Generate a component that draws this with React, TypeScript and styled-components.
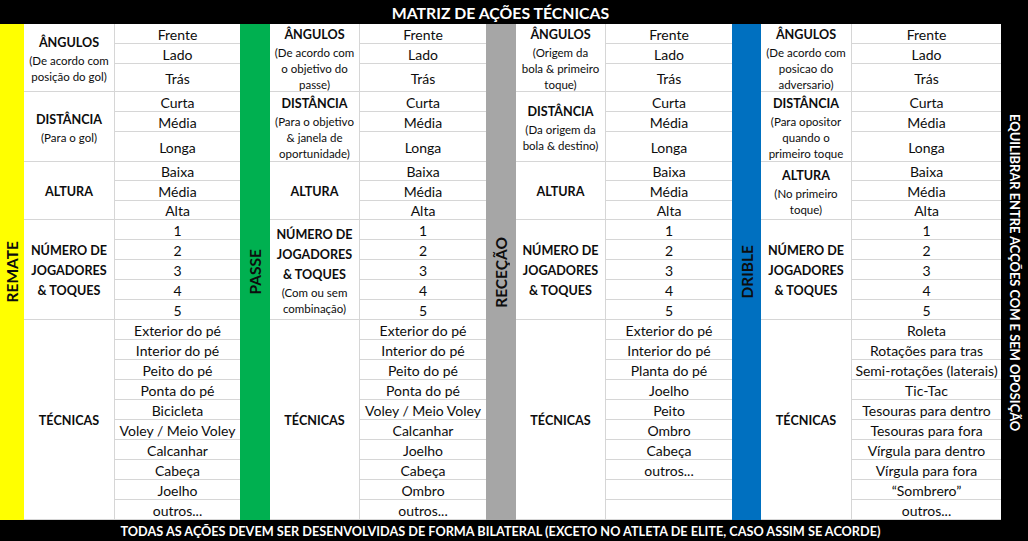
import React from 'react';
import styled, { createGlobalStyle } from 'styled-components';

const GlobalStyle = createGlobalStyle`
  html, body {
    margin: 0;
    padding: 0;
    background: #000;
  }
  * { box-sizing: border-box; }
`;

const Page = styled.div`
  width: 1028px;
  height: 541px;
  display: flex;
  background: #000;
  font-family: Lato, "Open Sans", sans-serif;
  color: #0d0d0d;
  overflow: hidden;
`;

const Main = styled.div`
  width: 1001px;
  display: flex;
  flex-direction: column;
`;

const TitleBar = styled.div`
  height: 24px;
  display: flex;
  align-items: center;
  justify-content: center;
  color: #fff;
  font-weight: 700;
  font-size: 15.8px;
  padding-top: 1px;
`;

const Table = styled.div`
  height: 496px;
  display: flex;
`;

const Footer = styled.div`
  flex: 1;
  display: flex;
  align-items: center;
  justify-content: center;
  color: #fff;
  font-weight: 700;
  font-size: 12.7px;
`;

const SideNote = styled.div`
  width: 27px;
  display: flex;
  align-items: center;
  justify-content: center;
  padding-top: 4px;
`;

const SideText = styled.span`
  writing-mode: vertical-rl;
  color: #fff;
  font-weight: 700;
  font-size: 12.9px;
  white-space: nowrap;
`;

const Section = styled.div`
  display: flex;
`;

const ColorBar = styled.div<{ $color: string; $width: number }>`
  width: ${p => p.$width}px;
  background: ${p => p.$color};
  display: flex;
  align-items: center;
  justify-content: center;
`;

const BarLabel = styled.span`
  writing-mode: vertical-rl;
  transform: rotate(180deg);
  font-weight: 700;
  font-size: 15.5px;
  color: #0d0d0d;
  white-space: nowrap;
`;

const Body = styled.div`
  display: flex;
  flex-direction: column;
  background: #fff;
`;

const Group = styled.div<{ $height: number }>`
  height: ${p => p.$height}px;
  flex-shrink: 0;
  display: flex;
`;

const LabelCell = styled.div<{ $width: number }>`
  width: ${p => p.$width}px;
  border-right: 1px solid #d6d6d6;
  border-bottom: 1px solid #d6d6d6;
  display: flex;
  flex-direction: column;
  align-items: center;
  justify-content: center;
  text-align: center;
  padding-top: 2px;
`;

const LabelTitle = styled.div`
  font-weight: 700;
  font-size: 12.6px;
  line-height: 20px;
  white-space: pre-line;
`;

const LabelSub = styled.div`
  font-size: 11.5px;
  line-height: 16px;
  white-space: pre-line;
`;

const ValueList = styled.div<{ $width: number }>`
  width: ${p => p.$width}px;
  display: flex;
  flex-direction: column;
`;

const ValueCell = styled.div<{ $height: number }>`
  height: ${p => p.$height}px;
  flex-shrink: 0;
  display: flex;
  align-items: center;
  justify-content: center;
  font-size: 14px;
  white-space: nowrap;
  padding-top: 1px;
  border-bottom: 1px solid #d6d6d6;
`;

type GroupData = { title: string; sub?: string; values: string[]; heights: number[] };

const angHeights = [20, 20, 28];
const distHeights = [20, 20, 30];
const altHeights = [19, 20, 19];
const numHeights = [20, 20, 20, 20, 20];
const tecHeights = Array(10).fill(20);

const angulos = ['Frente', 'Lado', 'Trás'];
const distancias = ['Curta', 'Média', 'Longa'];
const alturas = ['Baixa', 'Média', 'Alta'];
const numeros = ['1', '2', '3', '4', '5'];
const numTitle = 'NÚMERO DE\nJOGADORES\n& TOQUES';

type SectionData = {
  name: string;
  color: string;
  bar: number;
  label: number;
  value: number;
  groups: GroupData[];
};

const sections: SectionData[] = [
  {
    name: 'REMATE', color: '#ffff00', bar: 24, label: 91, value: 125,
    groups: [
      { title: 'ÂNGULOS', sub: '(De acordo com\nposição do gol)', values: angulos, heights: angHeights },
      { title: 'DISTÂNCIA', sub: '(Para o gol)', values: distancias, heights: distHeights },
      { title: 'ALTURA', values: alturas, heights: altHeights },
      { title: numTitle, values: numeros, heights: numHeights },
      {
        title: 'TÉCNICAS', heights: tecHeights,
        values: ['Exterior do pé', 'Interior do pé', 'Peito do pé', 'Ponta do pé', 'Bicicleta',
          'Voley / Meio Voley', 'Calcanhar', 'Cabeça', 'Joelho', 'outros...'],
      },
    ],
  },
  {
    name: 'PASSE', color: '#00b050', bar: 30, label: 90, value: 126,
    groups: [
      { title: 'ÂNGULOS', sub: '(De acordo com\no objetivo do\npasse)', values: angulos, heights: angHeights },
      { title: 'DISTÂNCIA', sub: '(Para o objetivo\n& janela de\noportunidade)', values: distancias, heights: distHeights },
      { title: 'ALTURA', values: alturas, heights: altHeights },
      { title: numTitle, sub: '(Com ou sem\ncombinação)', values: numeros, heights: numHeights },
      {
        title: 'TÉCNICAS', heights: tecHeights,
        values: ['Exterior do pé', 'Interior do pé', 'Peito do pé', 'Ponta do pé', 'Voley / Meio Voley',
          'Calcanhar', 'Joelho', 'Cabeça', 'Ombro', 'outros...'],
      },
    ],
  },
  {
    name: 'RECEÇÃO', color: '#a6a6a6', bar: 30, label: 90, value: 126,
    groups: [
      { title: 'ÂNGULOS', sub: '(Origem da\nbola & primeiro\ntoque)', values: angulos, heights: angHeights },
      { title: 'DISTÂNCIA', sub: '(Da origem da\nbola & destino)', values: distancias, heights: distHeights },
      { title: 'ALTURA', values: alturas, heights: altHeights },
      { title: numTitle, values: numeros, heights: numHeights },
      {
        title: 'TÉCNICAS', heights: tecHeights,
        values: ['Exterior do pé', 'Interior do pé', 'Planta do pé', 'Joelho', 'Peito',
          'Ombro', 'Cabeça', 'outros...', '', ''],
      },
    ],
  },
  {
    name: 'DRIBLE', color: '#0070c0', bar: 29, label: 91, value: 149,
    groups: [
      { title: 'ÂNGULOS', sub: '(De acordo com\nposicao do\nadversario)', values: angulos, heights: angHeights },
      { title: 'DISTÂNCIA', sub: '(Para opositor\nquando o\nprimeiro toque', values: distancias, heights: distHeights },
      { title: 'ALTURA', sub: '(No primeiro\ntoque)', values: alturas, heights: altHeights },
      { title: numTitle, values: numeros, heights: numHeights },
      {
        title: 'TÉCNICAS', heights: tecHeights,
        values: ['Roleta', 'Rotações para tras', 'Semi-rotações (laterais)', 'Tic-Tac',
          'Tesouras para dentro', 'Tesouras para fora', 'Vírgula para dentro', 'Vírgula para fora',
          '“Sombrero”', 'outros...'],
      },
    ],
  },
];

const sum = (xs: number[]) => xs.reduce((a, b) => a + b, 0);

const MatrixSection: React.FC<{ data: SectionData }> = ({ data }) => (
  <Section>
    <ColorBar $color={data.color} $width={data.bar}>
      <BarLabel>{data.name}</BarLabel>
    </ColorBar>
    <Body>
      {data.groups.map((g, i) => (
        <Group key={i} $height={sum(g.heights)}>
          <LabelCell $width={data.label}>
            <LabelTitle>{g.title}</LabelTitle>
            {g.sub && <LabelSub>{g.sub}</LabelSub>}
          </LabelCell>
          <ValueList $width={data.value}>
            {g.values.map((v, j) => (
              <ValueCell key={j} $height={g.heights[j]}>{v}</ValueCell>
            ))}
          </ValueList>
        </Group>
      ))}
    </Body>
  </Section>
);

export default function App() {
  return (
    <>
      <GlobalStyle />
      <Page>
        <Main>
          <TitleBar>MATRIZ DE AÇÕES TÉCNICAS</TitleBar>
          <Table>
            {sections.map(s => <MatrixSection key={s.name} data={s} />)}
          </Table>
          <Footer>
            TODAS AS AÇÕES DEVEM SER DESENVOLVIDAS DE FORMA BILATERAL (EXCETO NO ATLETA DE ELITE, CASO ASSIM SE ACORDE)
          </Footer>
        </Main>
        <SideNote>
          <SideText>EQUILIBRAR ENTRE ACÇÕES COM E SEM OPOSIÇÃO</SideText>
        </SideNote>
      </Page>
    </>
  );
}
